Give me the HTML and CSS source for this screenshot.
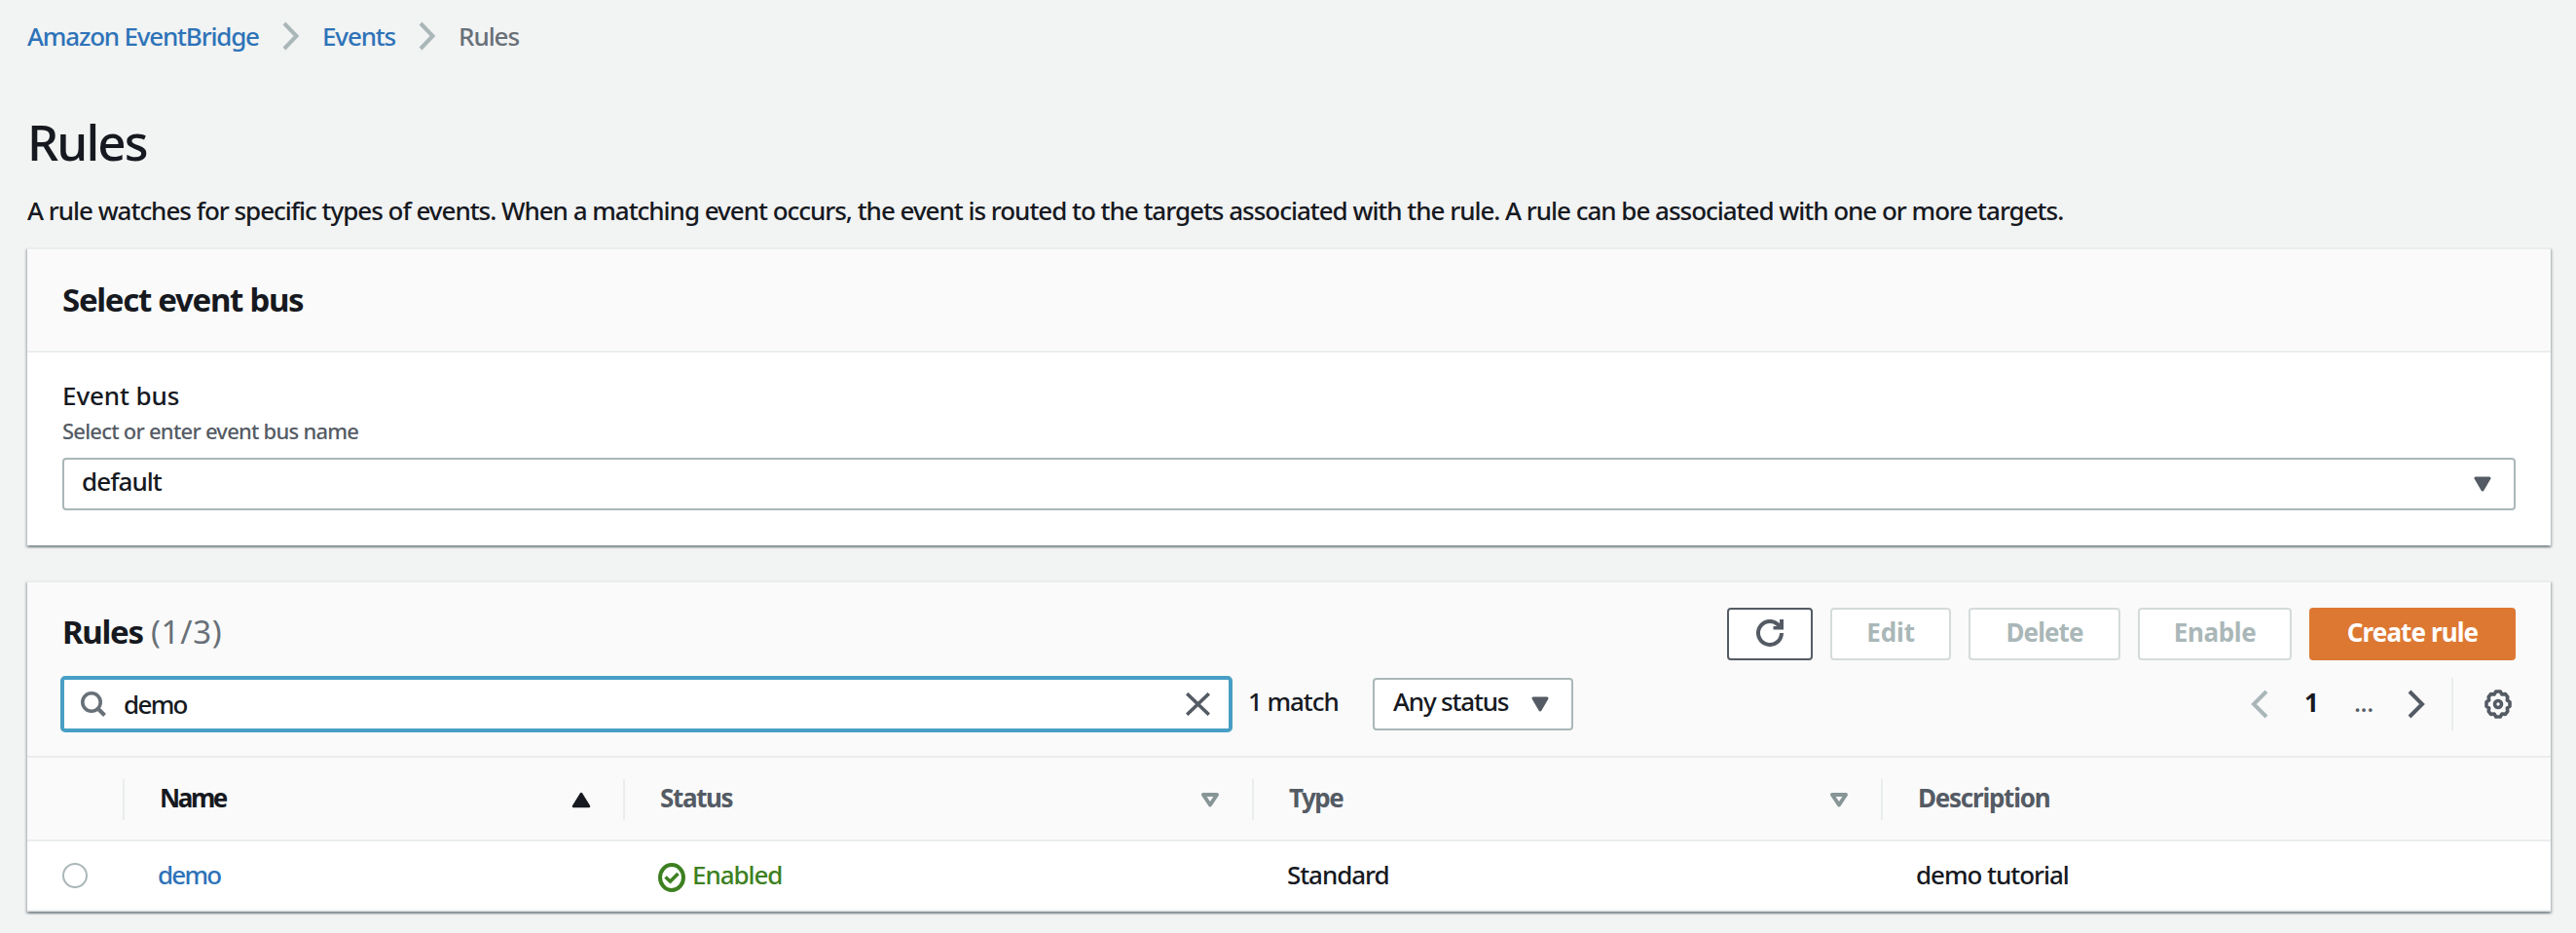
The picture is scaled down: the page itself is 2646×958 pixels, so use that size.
FILE: index.html
```html
<!DOCTYPE html>
<html lang="en">
<head>
<meta charset="utf-8">
<title>Rules</title>
<link rel="stylesheet" href="styles.css">
</head>
<body>
<nav class="breadcrumb">
  <a class="crumb crumb-service">Amazon EventBridge</a>
  <svg class="crumb-sep" width="18" height="30" viewBox="0 0 18 30"><path d="M2 2 14.500 15 2 28" fill="none" stroke="#aab7b8" stroke-width="4"/></svg>
  <a class="crumb crumb-events">Events</a>
  <svg class="crumb-sep" width="18" height="30" viewBox="0 0 18 30"><path d="M2 2 14.500 15 2 28" fill="none" stroke="#aab7b8" stroke-width="4"/></svg>
  <span class="crumb crumb-current">Rules</span>
</nav>

<h1 class="title">Rules</h1>
<p class="intro">A rule watches for specific types of events. When a matching event occurs, the event is routed to the targets associated with the rule. A rule can be associated with one or more targets.</p>

<section class="card bus">
  <header class="card-head"><h2 class="card-title">Select event bus</h2></header>
  <div class="card-body">
    <div class="label">Event bus</div>
    <div class="hint">Select or enter event bus name</div>
    <div class="select">
      <span class="select-value">default</span>
      <svg width="18" height="16" viewBox="0 0 18 16"><path d="M2 2H16L9 14Z" fill="#545b64" stroke="#545b64" stroke-width="3" stroke-linejoin="round"/></svg>
    </div>
  </div>
</section>

<section class="card rules">
  <header class="toolbar">
    <div class="toolbar-top">
      <h2 class="rules-title">Rules <span class="count">(1/3)</span></h2>
      <div class="actions">
        <button class="btn btn-refresh"><svg width="28" height="28" viewBox="0 0 28 28"><path d="M26 14A12 12 0 1 1 21.500 4.600L25 8" fill="none" stroke="#545b64" stroke-width="4"/><path d="M24 0H28V10.500H17.500V7H24Z" fill="#545b64"/><path d="M20.500 8 24 4V9Z" fill="#545b64"/></svg></button>
        <button class="btn btn-edit">Edit</button>
        <button class="btn btn-delete">Delete</button>
        <button class="btn btn-enable">Enable</button>
        <button class="btn btn-primary">Create rule</button>
      </div>
    </div>
    <div class="toolbar-filter">
      <div class="search">
        <svg width="26" height="26" viewBox="0 0 26 26"><circle cx="11" cy="11" r="9.200" fill="none" stroke="#687078" stroke-width="3.600"/><path d="M17 17 24.500 24.500" stroke="#687078" stroke-width="4"/></svg>
        <span class="search-text">demo</span>
        <svg class="clear" width="25" height="24" viewBox="0 0 25 24"><path d="M1.200 1.200 23.800 22.800M23.800 1.200 1.200 22.800" stroke="#545b64" stroke-width="3.600"/></svg>
      </div>
      <span class="matches">1 match</span>
      <div class="status-filter">
        <span class="status-filter-text">Any status</span>
        <svg width="18" height="16" viewBox="0 0 18 16"><path d="M2 2H16L9 14Z" fill="#545b64" stroke="#545b64" stroke-width="3" stroke-linejoin="round"/></svg>
      </div>
      <div class="pager">
        <svg width="18" height="30" viewBox="0 0 18 30"><path d="M16 2 3 15 16 28" fill="none" stroke="#aab7b8" stroke-width="4"/></svg>
        <span class="page">1</span>
        <span class="dots">...</span>
        <svg width="18" height="30" viewBox="0 0 18 30"><path d="M2 2 15 15 2 28" fill="none" stroke="#545b64" stroke-width="4"/></svg>
      </div>
      <div class="settings">
        <svg width="28" height="30" viewBox="0 0 28 30" fill="none" stroke="#545b64"><path d="M11.800 2H16.200L18 5 21.400 4.600 23.800 7.700 23.300 11 26 12.800V17.200L23.300 19 23.800 22.300 21.400 25.400 18 25 16.200 28H11.800L10 25 6.600 25.400 4.200 22.300 4.700 19 2 17.200V12.800L4.700 11 4.200 7.700 6.600 4.600 10 5Z" stroke-width="3.600" stroke-linejoin="round"/><circle cx="14" cy="15" r="3.500" stroke-width="3.600"/></svg>
      </div>
    </div>
  </header>

  <div class="row row-head">
    <div class="cell"></div>
    <div class="cell active"><span class="h-name">Name</span><svg width="20" height="17" viewBox="0 0 20 17"><path d="M10 2 18 15H2Z" fill="#16191f" stroke="#16191f" stroke-width="2.500" stroke-linejoin="round"/></svg></div>
    <div class="cell"><span class="h-status">Status</span><svg width="20" height="17" viewBox="0 0 20 17"><path d="M3 3H17L10 13.500Z" fill="none" stroke="#879596" stroke-width="4" stroke-linejoin="round"/></svg></div>
    <div class="cell"><span class="h-type">Type</span><svg width="20" height="17" viewBox="0 0 20 17"><path d="M3 3H17L10 13.500Z" fill="none" stroke="#879596" stroke-width="4" stroke-linejoin="round"/></svg></div>
    <div class="cell"><span class="h-desc">Description</span></div>
  </div>
  <div class="row row-data">
    <div class="cell cell-radio"><span class="radio"></span></div>
    <div class="cell link"><span class="d-name">demo</span></div>
    <div class="cell enabled"><svg width="28" height="30" viewBox="0 0 28 30" fill="none" stroke="#3d8021"><ellipse cx="14" cy="15" rx="12" ry="13" stroke-width="4"/><path d="M7.500 14.500 12.500 19 20.500 11" stroke-width="3.600"/></svg><span class="d-status">Enabled</span></div>
    <div class="cell"><span class="d-type">Standard</span></div>
    <div class="cell"><span class="d-desc">demo tutorial</span></div>
  </div>
</section>
</body>
</html>
```
FILE: styles.css
```css
* { box-sizing: border-box; }

body {
  margin: 0;
  padding: 15px 26px 22px 28px;
  min-height: 958px;
  background: #f2f3f3;
  color: #16191f;
  font: 500 26px/44px "Noto Sans", "Open Sans", sans-serif;
  letter-spacing: -1.07px;
}
h1, h2, p { margin: 0; }
svg { display: block; flex: none; }
span, a { white-space: nowrap; }

.breadcrumb { display: flex; align-items: center; height: 44px; }
.crumb { flex: none; color: #2e73b8; }
.crumb-service { width: 262px; letter-spacing: -1.2px; }
.crumb-events { width: 99px; letter-spacing: -1.15px; }
.crumb-current { color: #687078; letter-spacing: -1.05px; }
.crumb-sep { margin-right: 23px; }

.title {
  margin-top: 51px;
  font-size: 51px;
  font-weight: 500;
  line-height: 70px;
  letter-spacing: -1.9px;
}
.intro { margin-top: 14px; white-space: nowrap; letter-spacing: -1.023px; }

.card {
  background: #fff;
  border-top: 2px solid #eaeded;
  box-shadow: 0 2px 2px 0 rgba(0, 28, 36, .3), 2px 2px 2px 0 rgba(0, 28, 36, .15), -2px 2px 2px 0 rgba(0, 28, 36, .15);
}
.bus { margin-top: 16px; height: 306px; }
.card-head {
  height: 106px;
  padding: 27px 36px 0;
  background: #fafafa;
  border-bottom: 2px solid #eaeded;
}
.card-title, .rules-title { font-size: 33px; line-height: 50px; font-weight: 700; letter-spacing: -1.3px; }
.card-body { padding: 22px 36px 36px; }
.label { line-height: 44px; letter-spacing: -.1px; }
.hint { margin-top: -2px; font-size: 22px; line-height: 32px; color: #545b64; letter-spacing: -.77px; }
.select {
  display: flex;
  justify-content: space-between;
  height: 54px;
  margin-top: 12px;
  padding: 0 23px 0 18px;
  background: #fff;
  border: 2px solid #aab7b8;
  border-radius: 4px;
}
.select svg { margin-top: 17px; }
.select-value { letter-spacing: -.95px; }

.rules { margin-top: 36px; height: 340px; }
.toolbar { height: 180px; padding: 26px 36px 0; background: #fafafa; border-bottom: 2px solid #eaeded; }
.toolbar-top { display: flex; justify-content: space-between; height: 54px; }
.count { font-weight: 400; color: #687078; letter-spacing: .7px; margin-left: 1px; }
.actions { display: flex; gap: 18px; }
.btn {
  display: block;
  height: 54px;
  padding: 0 0 4px;
  border: 2px solid #d5dbdb;
  border-radius: 4px;
  background: #fff;
  color: #aab7b8;
  font: 700 26px/44px "Noto Sans", "Open Sans", sans-serif;
  text-align: center;
}
.btn-refresh { width: 88px; padding: 0 28px 2px; border-color: #545b64; }
.btn-edit { width: 124px; letter-spacing: -.1px; }
.btn-delete { width: 156px; letter-spacing: -.9px; }
.btn-enable { width: 158px; letter-spacing: -.35px; }
.btn-primary { width: 212px; background: #dd7833; border-color: #dd7833; color: #fff; letter-spacing: -.9px; }

.toolbar-filter { display: flex; height: 54px; margin-top: 18px; }
.search {
  display: flex;
  align-items: center;
  width: 1204px;
  height: 58px;
  margin: -2px 0 0 -2px;
  padding: 0 19px 0 17px;
  background: #fff;
  border: 4px solid #489fc5;
  border-radius: 5px;
}
.search-text { margin-left: 18px; padding-bottom: 1px; letter-spacing: -1.7px; }
.clear { margin-left: auto; }
.matches { width: 144px; padding-left: 16px; line-height: 48px; }
.status-filter {
  display: flex;
  justify-content: space-between;
  width: 206px;
  height: 54px;
  padding: 0 23px 0 19px;
  background: #fff;
  border: 2px solid #aab7b8;
  border-radius: 4px;
}
.status-filter svg { margin-top: 17px; }
.status-filter-text { line-height: 44px; letter-spacing: -1.2px; }
.pager { display: flex; align-items: center; margin-left: auto; width: 206px; }
.page { margin-left: 37px; font-weight: 700; width: 51px; padding-bottom: 4px; }
.dots { width: 55px; color: #545b64; letter-spacing: -.5px; padding-bottom: 4px; }
.settings { width: 66px; padding: 12px 0 0 32px; border-left: 2px solid #eaeded; }

.row { display: grid; grid-template-columns: 100px 514px 646px 646px 1fr; }
.row-head { height: 86px; padding: 22px 0; background: #fafafa; border-bottom: 2px solid #eaeded; font-weight: 700; color: #545b64; }
.row-head .cell { display: flex; justify-content: space-between; height: 42px; padding: 0 33px 0 36px; border-right: 2px solid #eaeded; line-height: 38px; }
.row-head .cell:last-child { border-right: 0; }
.row-head svg { margin-top: 13px; }
.row-head .active { color: #16191f; }
.row-data { height: 72px; border-bottom: 2px solid #eaeded; }
.row-data .cell { padding: 13px 0 0 34px; line-height: 42px; }
.row-data .cell-radio { padding: 22px 0 0 36px; }
.radio { display: block; width: 26px; height: 26px; border: 2px solid #aab7b8; border-radius: 50%; }
.row-data .link { color: #2e73b8; }
.row-data .enabled { display: flex; color: #3d8021; }
.enabled svg { margin-top: 9px; }
.enabled .d-status { margin-left: 7px; }

.h-name { letter-spacing: -2.4px; }
.h-status { letter-spacing: -1.35px; }
.h-type { letter-spacing: -1.5px; }
.h-desc { letter-spacing: -1.25px; }
.d-name { letter-spacing: -1.8px; }
.d-desc { letter-spacing: -1.05px; }
```
